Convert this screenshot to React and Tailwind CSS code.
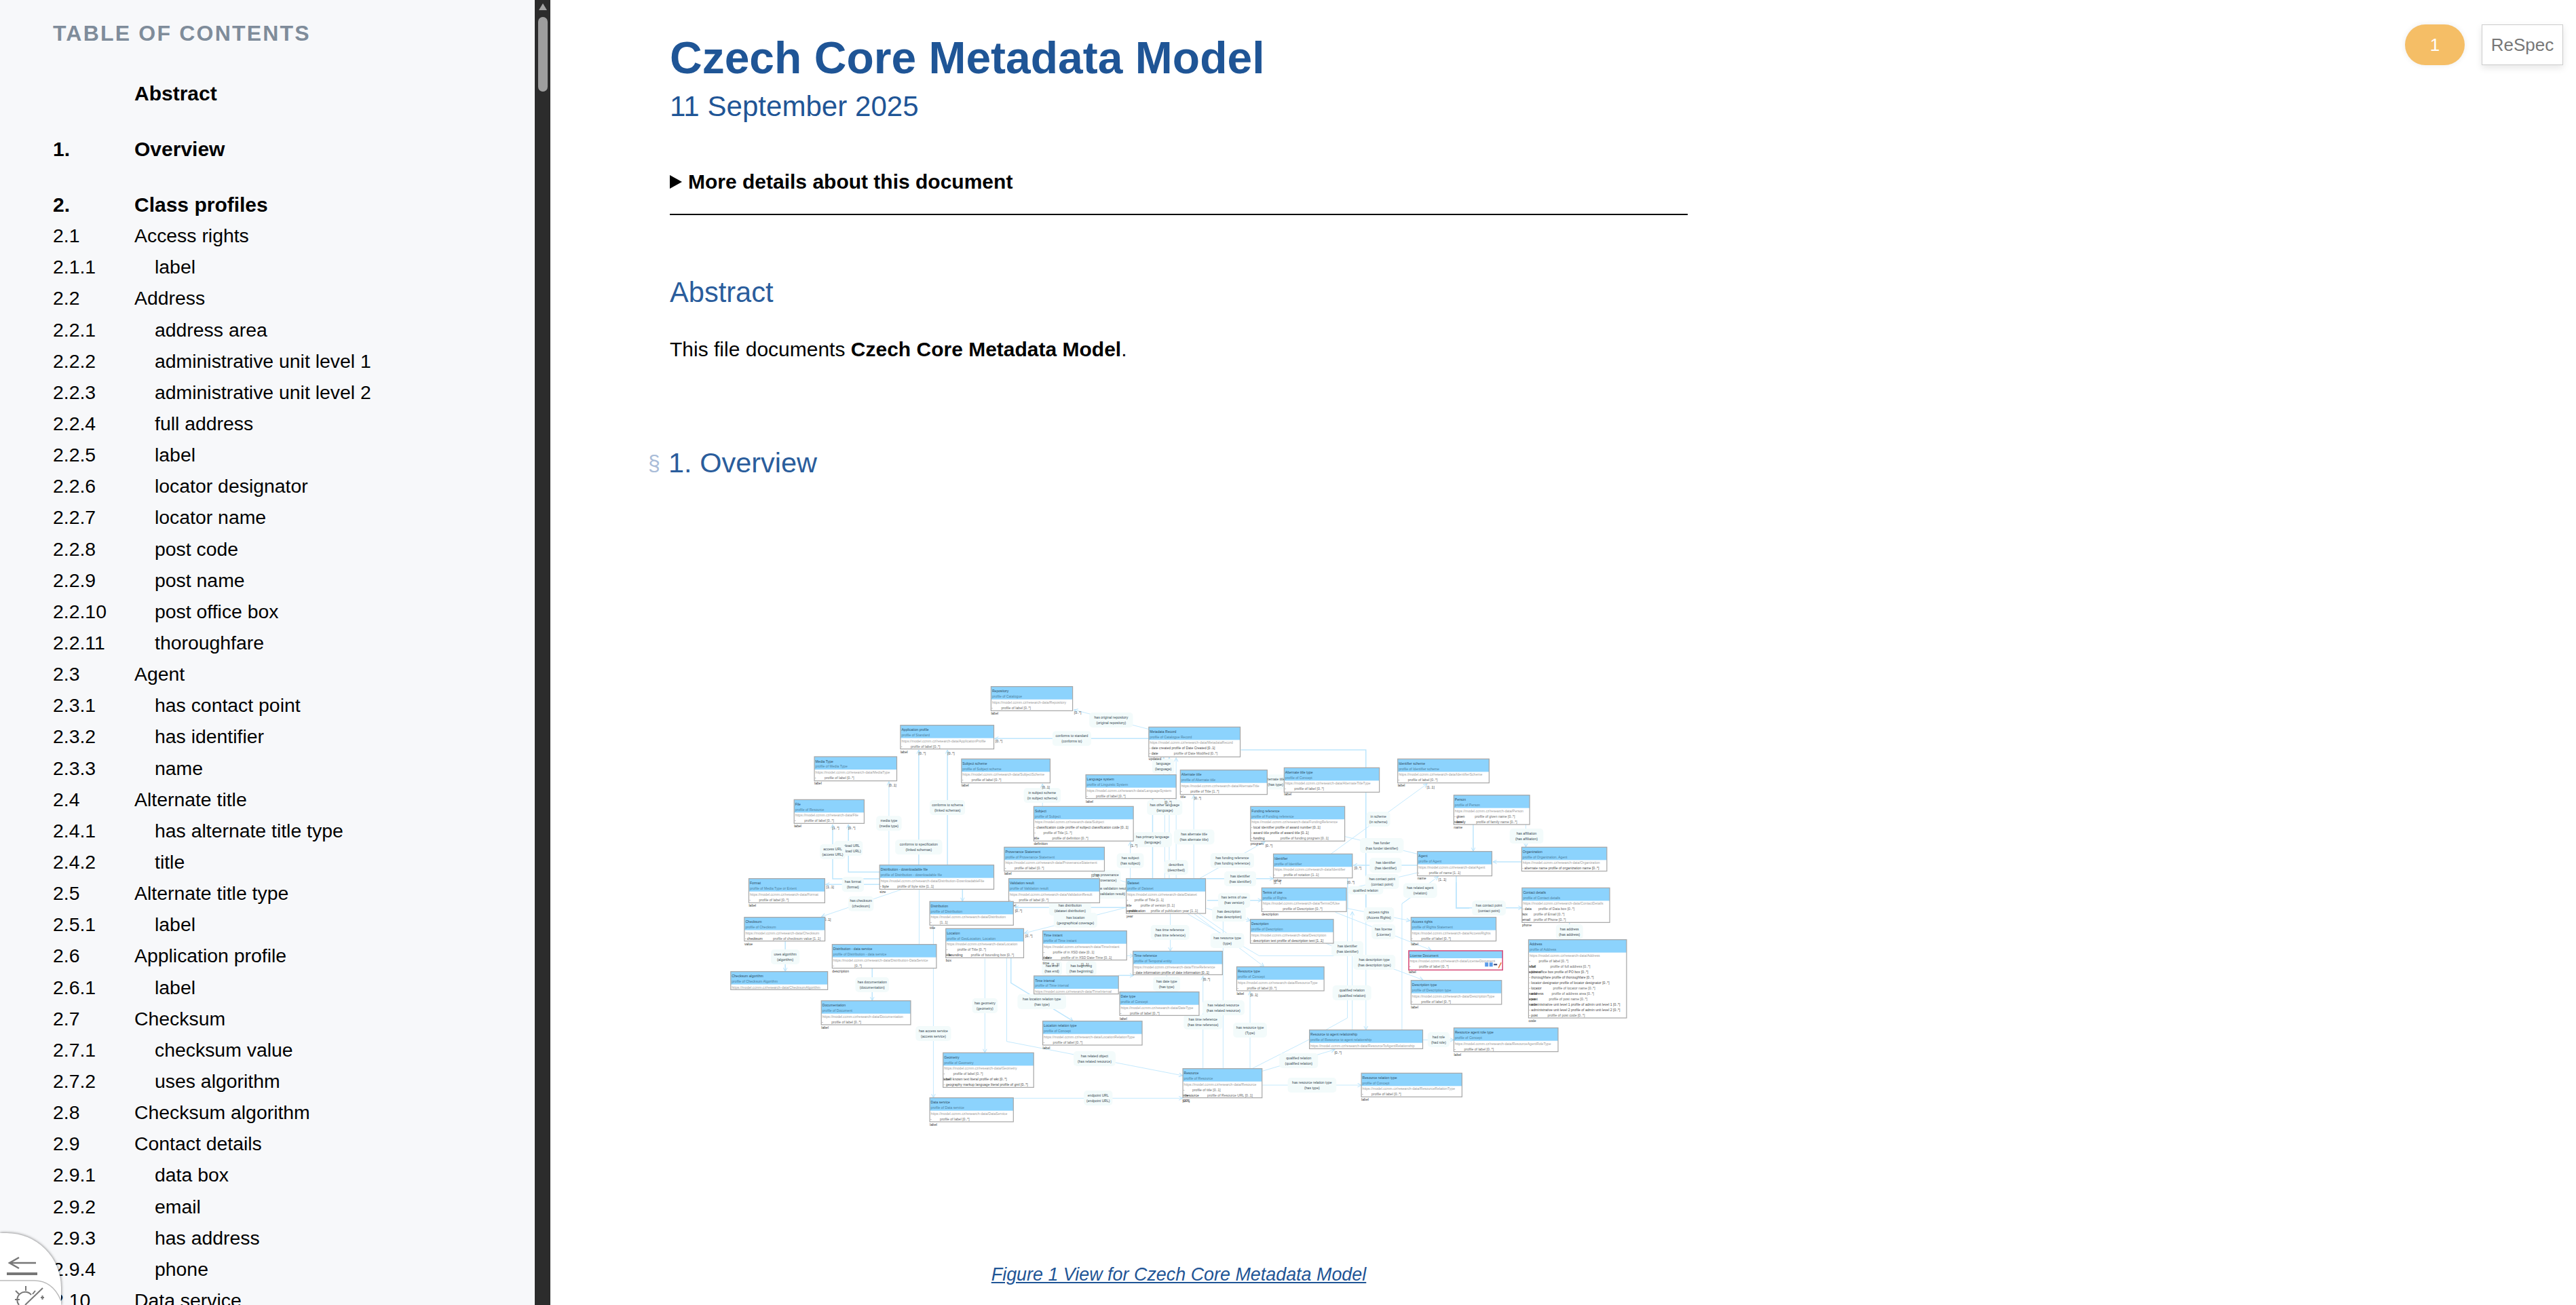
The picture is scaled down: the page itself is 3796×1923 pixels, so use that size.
const tocRows = [
  ['', 'Abstract', 0], ['1.', 'Overview', 0], ['2.', 'Class profiles', 0],
  ['2.1', 'Access rights', 1], ['2.1.1', 'label', 2], ['2.2', 'Address', 1],
  ['2.2.1', 'address area', 2], ['2.2.2', 'administrative unit level 1', 2], ['2.2.3', 'administrative unit level 2', 2],
  ['2.2.4', 'full address', 2], ['2.2.5', 'label', 2], ['2.2.6', 'locator designator', 2], ['2.2.7', 'locator name', 2],
  ['2.2.8', 'post code', 2], ['2.2.9', 'post name', 2], ['2.2.10', 'post office box', 2], ['2.2.11', 'thoroughfare', 2],
  ['2.3', 'Agent', 1], ['2.3.1', 'has contact point', 2], ['2.3.2', 'has identifier', 2], ['2.3.3', 'name', 2],
  ['2.4', 'Alternate title', 1], ['2.4.1', 'has alternate title type', 2], ['2.4.2', 'title', 2],
  ['2.5', 'Alternate title type', 1], ['2.5.1', 'label', 2], ['2.6', 'Application profile', 1], ['2.6.1', 'label', 2],
  ['2.7', 'Checksum', 1], ['2.7.1', 'checksum value', 2], ['2.7.2', 'uses algorithm', 2], ['2.8', 'Checksum algorithm', 1],
  ['2.9', 'Contact details', 1], ['2.9.1', 'data box', 2], ['2.9.2', 'email', 2], ['2.9.3', 'has address', 2], ['2.9.4', 'phone', 2],
  ['2.10', 'Data service', 1],
];

// diagram coordinates were read off four crops, each with its own scale
const A = { ox: 1050, oy: 990, sx: 650 / 1568 };
const B = { ox: 1650, oy: 990, sx: 800 / 1568 };
const C = { ox: 1050, oy: 1300, sx: 700 / 1568 };
const D = { ox: 1700, oy: 1300, sx: 750 / 1568 };
const px = (r, x) => r.ox + x * r.sx;
const py = (r, y) => r.oy + y / 3;

const LABEL = ['-', 'profile of label [0..*]', 15, 'label'];

const nodes = [
  [A, 990, 65, 1280, 172, 'Repository', 'profile of Catalogue', 'Repository', [LABEL]],
  [A, 668, 236, 1000, 341, 'Application profile', 'profile of Standard', 'ApplicationProfile', [LABEL]],
  [A, 362, 375, 655, 482, 'Media Type', 'profile of Media Type', 'MediaType', [LABEL]],
  [A, 885, 385, 1200, 491, 'Subject scheme', 'profile of Subject scheme', 'SubjectScheme', [LABEL]],
  [A, 1142, 595, 1496, 748, 'Subject', 'profile of Subject', 'Subject', ['- classification code profile of subject classification code [0..1]', ['-', 'profile of Title [1..*]', 14, 'title'], ['-', 'profile of definition [0..*]', 27, 'definition']]],
  [A, 290, 565, 539, 670, 'File', 'profile of Resource', 'File', [LABEL]],
  [A, 1037, 775, 1393, 881, 'Provenance Statement', 'profile of Provenance Statement', 'ProvenanceStatement', [LABEL]],
  [A, 594, 854, 1000, 961, 'Distribution - downloadable file', 'profile of Distribution - downloadable file', 'Distribution-DownloadableFile', [['- byte', 'profile of byte size [1..1]', 26, 'size']]],
  [A, 129, 914, 399, 1021, 'Format', 'profile of Media Type or Extent', 'Format', [LABEL]],
  [A, 1053, 914, 1376, 1021, 'Validation result', 'profile of Validation result', 'ValidationResult', [LABEL]],
  [A, 1327, 455, 1648, 560, 'Language system', 'profile of Linguistic System', 'LanguageSystem', [LABEL]],
  [B, 84, 244, 348, 376, 'Metadata Record', 'profile of Catalogue Record', 'MetadataRecord', ['- date created profile of Date Created [0..1]', ['- date', 'profile of Date Modified [0..*]', 37, 'updated']]],
  [B, 175, 434, 426, 542, 'Alternate title', 'profile of Alternate title', 'AlternateTitle', [['-', 'profile of Title [1..*]', 15, 'title']]],
  [B, 475, 424, 750, 532, 'Alternate title type', 'profile of Concept', 'AlternateTitleType', [LABEL]],
  [B, 803, 385, 1067, 491, 'Identifier scheme', 'profile of Identifier scheme', 'IdentifierScheme', [LABEL]],
  [B, 965, 545, 1184, 675, 'Person', 'profile of Person', 'Person', [['- given', 'profile of given name [0..*]', 31, 'name'], ['- family', 'profile of family name [0..*]', 33, 'name']]],
  [B, 378, 595, 650, 748, 'Funding reference', 'profile of Funding reference', 'FundingReference', ['- local identifier profile of award number [0..1]', '- award title profile of award title [0..1]', ['- funding', 'profile of funding program [0..1]', 44, 'program']]],
  [B, 444, 805, 672, 911, 'Identifier', 'profile of Identifier', 'Identifier', [['-', 'profile of notation [1..1]', 15, 'value']]],
  [B, 860, 794, 1075, 902, 'Agent', 'profile of Agent', 'Agent', [['-', 'profile of name [1..1]', 17, 'name']]],
  [B, 1161, 775, 1407, 881, 'Organization', 'profile of Organization, Agent', 'Organization', ['- alternate name profile of organization name [0..*]']],
  [B, 19, 914, 248, 1068, 'Dataset', 'profile of Dataset', 'Dataset', [['-', 'profile of Title [1..1]', 12, 'title'], ['-', 'profile of version [0..1]', 21, 'version'], ['- publication', 'profile of publication year [1..1]', 36, 'year']]],
  [D, 333, 25, 594, 130, 'Terms of use', 'profile of Rights', 'TermsOfUse', [['-', 'profile of Description [0..*]', 31, 'description']]],
  [D, 1135, 25, 1405, 178, 'Contact details', 'profile of Contact details', 'ContactDetails', [['- data', 'profile of Data box [0..*]', 24, 'box'], ['-', 'profile of Email [0..*]', 17, 'email'], ['-', 'profile of Phone [0..*]', 17, 'phone']]],
  [C, 717, 85, 993, 190, 'Distribution', 'profile of Distribution', 'Distribution', [['-', '[1..1]', 15, 'title']]],
  [C, 105, 155, 371, 260, 'Checksum', 'profile of Checksum', 'Checksum', [['- checksum', 'profile of checksum value [1..1]', 42, 'value']]],
  [C, 770, 205, 1027, 334, 'Location', 'profile of GeoLocation, Location', 'Location', [['-', 'profile of Title [0..*]', 17, 'title'], ['- bounding', 'profile of bounding box [0..*]', 37, 'box']]],
  [C, 1090, 215, 1367, 344, 'Time instant', 'profile of Time instant', 'TimeInstant', [['-', 'profile of in XSD date [0..1]', 15, 'date'], ['- date', 'profile of in XSD Date-Time [0..1]', 27, 'time']]],
  [C, 395, 275, 739, 380, 'Distribution - data service', 'profile of Distribution - data service', 'Distribution-DataService', [['-', '[0..*]', 33, 'description']]],
  [C, 60, 395, 380, 475, 'Checksum algorithm', 'profile of Checksum Algorithm', 'ChecksumAlgorithm', []],
  [C, 1388, 305, 1683, 409, 'Time reference', 'profile of Temporal entity', 'TimeReference', ['- date information profile of date information [0..1]']],
  [C, 1061, 414, 1340, 494, 'Time interval', 'profile of Time interval', 'TimeInterval', []],
  [C, 1344, 485, 1606, 589, 'Date type', 'profile of Concept', 'DateType', [LABEL]],
  [C, 359, 524, 654, 630, 'Documentation', 'profile of Document', 'Documentation', [LABEL]],
  [C, 1090, 614, 1418, 720, 'Location relation type', 'profile of Concept', 'LocationRelationType', [LABEL]],
  [C, 761, 754, 1060, 907, 'Geometry', 'profile of Geometry', 'Geometry', [LABEL, '- well known text literal profile of wkt [0..*]', '- geography markup language literal profile of gml [0..*]']],
  [C, 717, 953, 993, 1059, 'Data service', 'profile of Data service', 'DataService', [LABEL]],
  [D, 298, 164, 554, 270, 'Description', 'profile of Description', 'Description', ['- description text profile of description text [1..1]']],
  [D, 793, 155, 1055, 260, 'Access rights', 'profile of Rights Statement', 'AccessRights', [LABEL]],
  [D, 786, 303, 1075, 388, 'License Document', '', 'LicenseDocument', [LABEL], true],
  [D, 1155, 254, 1457, 600, 'Address', 'profile of Address', 'Address', [LABEL, ['- full', 'profile of full address [0..*]', 32, 'address'], '- post office box profile of PO box [0..*]', '- thoroughfare profile of thoroughfare [0..*]', '- locator designator profile of locator designator [0..*]', ['- locator', 'profile of locator name [0..*]', 36, 'name'], ['- address', 'profile of address area [0..*]', 34, 'area'], ['- post', 'profile of post name [0..*]', 30, 'name'], '- administrative unit level 1 profile of admin unit level 1 [0..*]', '- administrative unit level 2 profile of admin unit level 2 [0..*]', ['- post', 'profile of post code [0..*]', 28, 'code']]],
  [D, 256, 374, 525, 480, 'Resource type', 'profile of Concept', 'ResourceType', [LABEL]],
  [D, 793, 434, 1072, 540, 'Description type', 'profile of Description type', 'DescriptionType', [LABEL]],
  [D, 480, 653, 829, 736, 'Resource to agent relationship', 'profile of Resource to agent relationship', 'ResourceToAgentRelationship', []],
  [D, 925, 644, 1246, 749, 'Resource agent role type', 'profile of Concept', 'ResourceAgentRoleType', [LABEL]],
  [D, 90, 824, 334, 953, 'Resource', 'profile of Resource', 'Resource', [['-', 'profile of title [0..1]', 14, 'title'], ['- resource', 'profile of Resource URL [0..1]', 36, 'URL']]],
  [D, 640, 844, 950, 949, 'Resource relation type', 'profile of Concept', 'ResourceRelationType', [LABEL]],
];

// [crop, arrow at end?, thick?, x, y, x, y, ...]
const edges = [
  [A, 1, 0, 1555, 255, 1285, 168], [A, 1, 1, 1555, 295, 1003, 295], [A, 1, 1, 733, 854, 733, 345], [A, 1, 1, 835, 854, 835, 345],
  [A, 1, 0, 627, 854, 627, 485], [A, 1, 1, 600, 915, 427, 915, 427, 675], [A, 1, 1, 600, 885, 483, 885, 483, 675], [A, 1, 1, 594, 940, 402, 940],
  [A, 1, 0, 1173, 595, 1173, 495], [A, 1, 0, 1485, 914, 1485, 752], [A, 1, 0, 1470, 930, 1350, 884],
  [C, 1, 0, 622, 33, 360, 152], [C, 1, 1, 825, 33, 825, 85], [C, 1, 0, 729, 190, 729, 953], [C, 0, 0, 682, 33, 682, 275],
  [C, 1, 1, 240, 262, 240, 395], [C, 1, 1, 527, 380, 527, 524], [C, 1, 1, 1365, 112, 998, 112], [C, 1, 0, 1365, 112, 1030, 225],
  [C, 1, 0, 899, 338, 899, 754], [C, 1, 1, 985, 336, 985, 445, 1190, 614], [C, 1, 0, 971, 336, 971, 704, 1552, 855], [C, 1, 0, 995, 955, 1552, 955],
  [C, 1, 0, 1120, 414, 1120, 348], [C, 1, 0, 1217, 414, 1217, 348], [C, 1, 1, 1340, 412, 1390, 412], [C, 1, 0, 1367, 325, 1390, 325],
  [C, 1, 0, 1511, 140, 1511, 305], [C, 1, 0, 1499, 409, 1499, 485],
  [B, 1, 1, 95, 914, 95, 562], [B, 1, 0, 130, 914, 130, 562], [B, 1, 0, 163, 914, 163, 380], [B, 1, 0, 143, 914, 143, 378], [B, 1, 0, 127, 455, 127, 378],
  [B, 1, 0, 214, 914, 214, 545], [B, 1, 0, 230, 914, 420, 750], [B, 1, 1, 250, 914, 444, 914], [B, 1, 0, 610, 805, 888, 495], [B, 0, 0, 650, 728, 860, 805],
  [B, 1, 1, 860, 855, 675, 855], [B, 1, 1, 1021, 675, 1021, 794], [B, 1, 0, 1173, 675, 1173, 775], [B, 1, 1, 1161, 840, 1078, 840], [B, 0, 0, 860, 888, 660, 960],
  [B, 1, 0, 815, 1025, 920, 905], [B, 0, 1, 350, 345, 711, 345, 711, 1050], [B, 0, 1, 658, 905, 658, 1050], [B, 0, 1, 972, 902, 972, 1045, 1010, 1045],
  [D, 1, 0, 654, 0, 654, 653], [D, 0, 0, 597, 0, 597, 600, 530, 653], [D, 1, 1, 165, 80, 333, 80], [D, 1, 0, 162, 115, 298, 170], [D, 1, 0, 594, 115, 790, 170],
  [D, 1, 0, 560, 133, 855, 300], [D, 0, 0, 530, 270, 630, 325], [D, 1, 0, 105, 140, 325, 325, 630, 325, 830, 432], [D, 1, 0, 125, 140, 340, 373], [D, 0, 0, 140, 140, 225, 225],
  [D, 1, 0, 152, 824, 152, 415], [D, 1, 0, 214, 824, 214, 140], [D, 1, 0, 297, 824, 297, 483], [D, 1, 0, 335, 835, 558, 740], [D, 0, 0, 303, 824, 480, 695],
  [D, 1, 0, 612, 653, 612, 130], [D, 0, 0, 765, 653, 765, 95, 820, 40], [D, 1, 0, 829, 697, 925, 697], [D, 1, 0, 335, 897, 640, 897], [D, 1, 1, 932, 0, 932, 113, 1135, 113], [D, 1, 1, 1281, 178, 1281, 254],
];

const edgeLabels = [
  [A, 1417, 213, 'has original repository', '(original repository)'], [A, 1277, 295, 'conforms to standard', '(conforms to)'],
  [A, 835, 600, 'conforms to schema', '(linked schemas)'], [A, 733, 775, 'conforms to specification', '(linked schemas)'],
  [A, 627, 670, 'media type', '(media type)'], [A, 483, 780, 'download URL', '(download URL)'], [A, 427, 795, 'access URL', '(access URL)'],
  [A, 499, 940, 'has format', '(format)'], [A, 1172, 546, 'in subject scheme', '(in subject scheme)'], [A, 1485, 835, 'has subject', '(has subject)'],
  [A, 1400, 910, 'has provenance', '(provenance)'], [A, 1420, 970, 'has validation result', '(validation result)'],
  [C, 490, 95, 'has checksum', '(checksum)'], [C, 1180, 115, 'has distribution', '(dataset distribution)'], [C, 1198, 168, 'has location', '(geographical coverage)'],
  [C, 1510, 222, 'has time reference', '(has time reference)'], [C, 240, 330, 'uses algorithm', '(algorithm)'], [C, 527, 453, 'has documentation', '(documentation)'],
  [C, 899, 546, 'has geometry', '(geometry)'], [C, 1087, 528, 'has location relation type', '(has type)'], [C, 729, 669, 'has access service', '(access service)'],
  [C, 1261, 780, 'has related object', '(has related resource)'], [C, 1273, 954, 'endpoint URL', '(endpoint URL)'], [C, 1120, 381, 'has end', '(has end)'],
  [C, 1217, 381, 'has beginning', '(has beginning)'], [C, 1499, 450, 'has date type', '(has type)'],
  [B, 126, 418, 'language', '(language)'], [B, 130, 600, 'has other language', '(language)'], [B, 95, 742, 'has primary language', '(language)'],
  [B, 215, 730, 'has alternate title', '(has alternate title)'], [B, 163, 865, 'describes', '(described)'], [B, 325, 834, 'has funding reference', '(has funding reference)'],
  [B, 348, 915, 'has identifier', '(has identifier)'], [B, 747, 651, 'in scheme', '(in scheme)'], [B, 757, 768, 'has funder', '(has funder identifier)'],
  [B, 768, 855, 'has identifier', '(has identifier)'], [B, 758, 927, 'has contact point', '(contact point)'], [B, 868, 967, 'has related agent', '(relation)'],
  [B, 1175, 726, 'has affiliation', '(has affiliation)'], [B, 450, 487, 'has alternate title type', '(has type)'],
  [D, 248, 80, 'has terms of use', '(has version)'], [D, 232, 141, 'has description', '(has description)'], [D, 694, 144, 'access rights', '(Access Rights)'],
  [D, 708, 219, 'has license', '(License)'], [D, 227, 258, 'has resource type', '(type)'], [D, 597, 294, 'has identifier', '(has identifier)'],
  [D, 680, 354, 'has description type', '(has description type)'], [D, 611, 489, 'qualified relation', '(qualified relation)'], [D, 215, 555, 'has related resource', '(has related resource)'],
  [D, 152, 618, 'has time reference', '(has time reference)'], [D, 297, 654, 'has resource type', '(Type)'], [D, 447, 789, 'qualified relation', '(qualified relation)'],
  [D, 878, 696, 'had role', '(had role)'], [D, 488, 897, 'has resource relation type', '(has type)'], [D, 1033, 114, 'has contact point', '(contact point)'],
  [D, 1281, 219, 'has address', '(has address)'], [D, 653, 36, 'qualified relation', ''],
];

const cards = [
  [A, 1298, 180, '[0..*]'], [A, 1018, 307, '[0..*]'], [A, 745, 360, '[0..*]'], [A, 848, 360, '[0..*]'], [A, 640, 502, '[0..1]'], [A, 1185, 510, '[0..1]'],
  [A, 438, 690, '[1..*]'], [A, 495, 690, '[0..*]'], [A, 418, 951, '[1..1]'], [A, 1498, 770, '[1..*]'], [A, 1360, 900, '[0..1]'],
  [C, 1010, 127, '[0..*]'], [C, 1044, 237, '[0..*]'], [C, 378, 165, '[0..1]'], [C, 1132, 364, '[1..1]'], [C, 1229, 364, '[1..1]'],
  [B, 225, 559, '[0..*]'], [B, 898, 510, '[1..1]'], [B, 431, 768, '[0..*]'], [B, 688, 868, '[0..*]'], [B, 932, 918, '[1..1]'], [B, 455, 930, '[1..*]'], [B, 668, 930, '[0..*]'], [B, 140, 578, '[0..*]'],
  [D, 163, 430, '[0..*]'], [D, 309, 498, '[0..1]'], [D, 568, 753, '[0..*]'], [D, 100, 967, '[0..*]'],
];

const FS = 5.1;

function DiagramNode({ data }) {
  const [r, x1, y1, x2, y2, title, sub, slug, rows, selected] = data;
  const x = px(r, x1), y = py(r, y1), w = px(r, x2) - x, h = py(r, y2) - y;
  const head = selected ? 11 : 19;
  let line = selected ? 19 : 27;
  return (
    <g>
      <rect x={x} y={y} width={w} height={h} fill="#fff" />
      <rect x={x} y={y} width={w} height={head} fill="#8cd3fd" />
      <text x={x + 1.5} y={y + 8.5} fontSize={FS} fill="#2c4a5e">{title}</text>
      {sub && <text x={x + 1.5} y={y + 16.2} fontSize={FS} fill="#4c7fa0">{sub}</text>}
      <text x={x + 1.5} y={y + line - 2} fontSize={FS} fill="#9a9a9a">{'https://model.ccmm.cz/research-data/' + slug}</text>
      {rows.map((row, i) => {
        const ty = y + line + 6 + i * 8;
        if (typeof row === 'string') {
          return <text key={i} x={x + 0.8} y={ty} fontSize={FS} fill="#444">{row}</text>;
        }
        return (
          <g key={i}>
            <text x={x + 0.8} y={ty} fontSize={FS} fill="#333">{row[0]}</text>
            <text x={x + row[2]} y={ty} fontSize={FS} fill="#666">{row[1]}</text>
            <text x={x} y={ty + 8} fontSize={FS} fill="#333">{row[3]}</text>
          </g>
        );
      })}
      <rect x={x} y={y} width={w} height={h} fill="none" stroke={selected ? '#d9537f' : '#a6a6a6'} strokeWidth={selected ? 1.6 : 1.2} />
      {selected && (
        <g>
          <rect x={x + w - 26} y={y + h - 11} width={5} height={6} fill="#5a9bea" />
          <rect x={x + w - 19.5} y={y + h - 11} width={5} height={6} fill="#5a9bea" />
          <rect x={x + w - 13} y={y + h - 9} width={5} height={2} fill="#2e3a6e" />
          <path d={`M${x + w - 6} ${y + h - 3} l4 -8`} stroke="#e5793f" strokeWidth="1.6" />
        </g>
      )}
    </g>
  );
}

function Diagram() {
  return (
    <svg className="mt-[288px] block w-[1500px] h-[700px]" viewBox="987 1000 1500 700" fill="none">
      <defs>
        <marker id="arrow" viewBox="0 0 10 10" refX="9" refY="5" markerWidth="7" markerHeight="7" markerUnits="userSpaceOnUse" orient="auto">
          <path d="M1 1 L9 5 L1 9" fill="none" stroke="#b4e2fd" strokeWidth="1.4" />
        </marker>
      </defs>
      {edges.map(([r, arrow, thick, ...pts], i) => {
        const points = [];
        for (let k = 0; k < pts.length; k += 2) points.push(`${px(r, pts[k])},${py(r, pts[k + 1])}`);
        return <polyline key={i} points={points.join(' ')} stroke="#bde6fd" strokeWidth={thick ? 1.5 : 0.9} markerEnd={arrow ? 'url(#arrow)' : undefined} />;
      })}
      {edgeLabels.map(([r, cx, cy, a, b], i) => {
        const x = px(r, cx), y = py(r, cy);
        const w = Math.max(a.length, b.length) * 2.45 + 8;
        const h = b ? 22 : 12;
        return (
          <g key={i}>
            <rect x={x - w / 2} y={y - h / 2} width={w} height={h} rx={5} fill="#f3fbfb" />
            <text x={x} y={b ? y - 2.2 : y + 1.8} fontSize={FS} fill="#33454f" textAnchor="middle">{a}</text>
            {b && <text x={x} y={y + 5.8} fontSize={FS} fill="#33454f" textAnchor="middle">{b}</text>}
          </g>
        );
      })}
      {cards.map(([r, x, y, t], i) => (
        <text key={i} x={px(r, x)} y={py(r, y) + 1.8} fontSize={FS} fill="#444" textAnchor="middle">{t}</text>
      ))}
      {nodes.map((n, i) => <DiagramNode key={i} data={n} />)}
    </svg>
  );
}

function Sidebar() {
  return (
    <aside className="relative w-[788px] h-full shrink-0 overflow-hidden bg-[#f7f8fa] pl-[78px] text-black">
      <h2 className="flex h-[98px] items-center text-[32px] font-bold uppercase tracking-[2.2px] text-[#7f8c9a]">Table of Contents</h2>
      <ul className="mt-[16px] text-[28.4px]">
        {tocRows.map(([num, text, level], i) => (
          <li key={i} className={`flex h-[46.15px] items-center ${level === 0 ? 'text-[30px] font-bold' : ''} ${i < 2 ? 'mb-[36px]' : ''}`}>
            <span className="w-[120px] shrink-0">{num}</span>
            <span className={level === 2 ? 'pl-[30px]' : ''}>{text}</span>
          </li>
        ))}
      </ul>
    </aside>
  );
}

function SidebarToggle() {
  return (
    <div className="absolute left-0 top-[1817px] h-[106px] w-[90px] overflow-hidden rounded-tr-[80px] bg-white shadow-[0_0_4px_rgba(0,0,0,0.6)]">
      <svg className="h-[106px] w-[90px]" viewBox="0 0 90 106" fill="none" stroke="#777">
        <path d="M14 44 H53 M28 36 L14 44 L28 52" strokeWidth="2.5" />
        <path d="M10 60 H55" strokeWidth="4" />
        <path d="M0 70 H50 Q78 70 90 100" stroke="#bbb" strokeWidth="1.5" />
        <path d="M63 81 L37 106" strokeWidth="2" />
        <path d="M28 106 A11 11 0 0 1 46 91" strokeWidth="2" />
        <path d="M38 78 V85 M23 85 L28 90 M52 85 L48 90 M22 98 H29 M60 95 H65 M62.5 92 V98" strokeWidth="2" />
      </svg>
    </div>
  );
}

export default function App() {
  return (
    <div className="relative flex h-[1923px] w-[3796px] overflow-hidden bg-white font-['Liberation_Sans',Arial,sans-serif]">
      <Sidebar />
      <SidebarToggle />

      {/* scrollbar of the table of contents */}
      <div className="relative h-full w-[23px] shrink-0 bg-[#2c2c2c]">
        <svg className="absolute left-[6px] top-[5px]" width="12" height="10" viewBox="0 0 12 10"><path d="M6 0 L12 10 H0 Z" fill="#a3a3a3" /></svg>
        <div className="absolute left-[5px] top-[25px] h-[110px] w-[14px] rounded-full bg-[#9e9e9e]" />
      </div>

      <main className="w-[1500px] ml-[176px] shrink-0">
        <h1 className="mt-[40px] text-[66px] font-bold leading-[90px] text-[#1f5596]">Czech Core Metadata Model</h1>
        <p className="mt-[2px] text-[42.1px] leading-[50px] text-[#1f5596]">11 September 2025</p>
        <div className="mt-[63px] flex items-center gap-[9px] text-[30px] font-bold leading-[46px] text-black">
          <svg width="18" height="20" viewBox="0 0 18 20"><path d="M0 0 L18 10 L0 20 Z" fill="#000" /></svg>
          <span>More details about this document</span>
        </div>
        <hr className="mt-[24px] h-[2px] border-0 bg-black" />
        <h2 className="mt-[84px] text-[41.6px] leading-[60px] text-[#2a5d9c]">Abstract</h2>
        <p className="mt-[31px] text-[30px] leading-[46px] text-black">This file documents <b>Czech Core Metadata Model</b>.</p>
        <h2 className="relative mt-[114px] text-[41.5px] leading-[60px] text-[#2a5d9c]">
          <span className="absolute left-[-32px] text-[32px] text-[#a9bcd8]">§</span>
          <span className="-ml-[2px]">1. Overview</span>
        </h2>
        <Diagram />
        <p className="mt-[158px] text-center text-[26.9px] italic leading-[40px] text-[#1f5596] underline">Figure 1 View for Czech Core Metadata Model</p>
      </main>

      <div className="absolute left-[3544px] top-[36px] flex h-[60px] w-[88px] items-center justify-center rounded-full bg-[#f5be66] text-[26px] text-white shadow-[0_0_8px_rgba(0,0,0,0.08)]">1</div>
      <div className="absolute left-[3657px] top-[36px] flex h-[60px] w-[120px] items-center justify-center border border-[#ccc] bg-white text-[26px] text-[#777] shadow-[0_4px_10px_rgba(0,0,0,0.1)]">ReSpec</div>
    </div>
  );
}
